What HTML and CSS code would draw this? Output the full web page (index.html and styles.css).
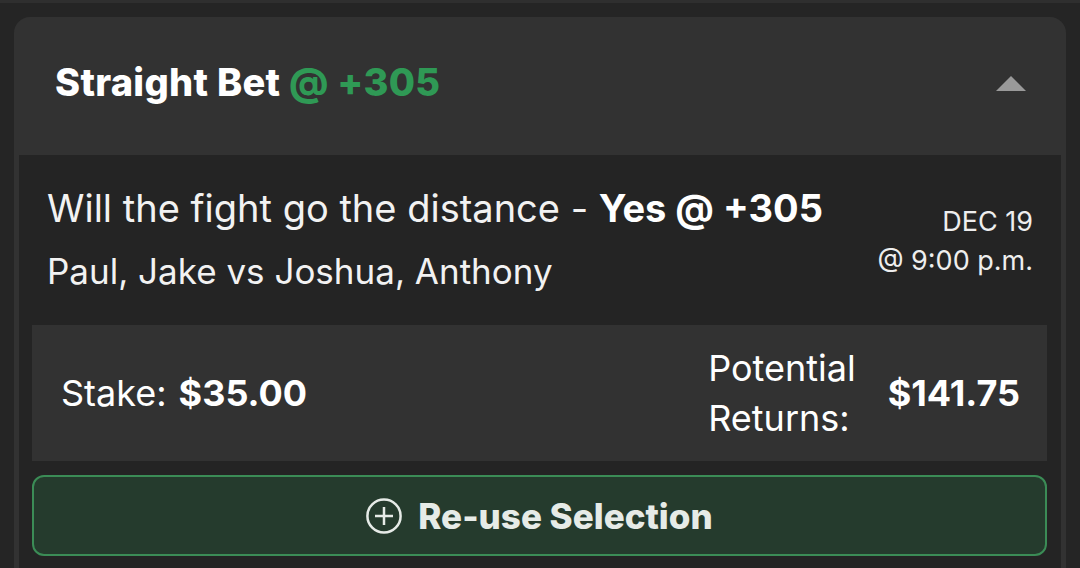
FILE: index.html
```html
<!DOCTYPE html>
<html>
<head>
<meta charset="utf-8">
<link rel="stylesheet" href="styles.css">
</head>
<body>
<div class="topstrip"></div>
<div class="page">
  <div class="card">
    <div class="card-header">
      <div class="title">Straight Bet <span class="odds">@ +305</span></div>
      <div class="chevron"></div>
    </div>
    <div class="panel">
      <div class="info">
        <div class="selection">
          <div class="market">Will the fight go the distance - <b>Yes @ +305</b></div>
          <div class="matchup">Paul, Jake vs Joshua, Anthony</div>
        </div>
        <div class="date">
          <div>DEC 19</div>
          <div>@ 9:00 p.m.</div>
        </div>
      </div>
      <div class="stake-box">
        <div class="stake"><span class="label">Stake:</span><span class="value">$35.00</span></div>
        <div class="returns"><span class="label">Potential<br>Returns:</span><span class="value">$141.75</span></div>
      </div>
      <button class="reuse">
        <svg class="plus" width="36" height="36" viewBox="0 0 36 36"><circle cx="18" cy="18" r="16.6" fill="none" stroke="#e6ebe7" stroke-width="2.5"/><path d="M18 9v18M9 18h18" stroke="#e6ebe7" stroke-width="2.5" fill="none"/></svg>
        <span>Re-use Selection</span>
      </button>
    </div>
  </div>
</div>
</body>
</html>
```
FILE: styles.css
```css
html, body {
  margin: 0;
  padding: 0;
  background: #252525;
  height: 568px;
  overflow: hidden;
  font-family: Inter, "Noto Sans", sans-serif;
  color: #ffffff;
}
.topstrip {
  height: 3px;
  background: #2f2f2f;
}
.page {
  padding: 14px 14px 0 14px;
}
.card {
  background: #323232;
  border-radius: 16px 16px 0 0;
  padding: 0 5px;
  height: 560px;
}
.card-header {
  display: flex;
  align-items: center;
  justify-content: space-between;
  padding: 45px 35px 53px 36px;
}
.title {
  font-size: 38px;
  font-weight: 800;
  line-height: 40px;
  letter-spacing: 0.3px;
}
.odds {
  color: #2f9955;
}
.chevron {
  width: 0;
  height: 0;
  border-left: 15px solid transparent;
  border-right: 15px solid transparent;
  border-bottom: 15px solid #9a9a9a;
  margin-top: 2px;
}
.panel {
  background: #242424;
  padding: 0 14px 0 13px;
  height: 420px;
}
.info {
  display: flex;
  justify-content: space-between;
  padding: 31px 14px 34px 15px;
}
.market {
  font-size: 38px;
  line-height: 44px;
  color: #f2f2f2;
  white-space: nowrap;
}
.market b {
  font-weight: 700;
  color: #ffffff;
}
.matchup {
  font-size: 35px;
  line-height: 40px;
  margin-top: 21px;
  color: #f2f2f2;
}
.date {
  margin-top: 16px;
  text-align: right;
  font-size: 27px;
  line-height: 39px;
  color: #eeeeee;
}
.stake-box {
  background: #323232;
  height: 136px;
  display: flex;
  align-items: center;
  justify-content: space-between;
  padding: 0 27px 0 29px;
}
.stake, .returns {
  display: flex;
  align-items: center;
  font-size: 36px;
}
.stake .label {
  margin-right: 12px;
}
.returns .label {
  line-height: 50px;
  margin-right: 32px;
}
.value {
  font-weight: 700;
}
.reuse {
  margin-top: 14px;
  width: 100%;
  height: 81px;
  background: #253b2d;
  border: 2px solid #3b8c56;
  border-radius: 12px;
  display: flex;
  align-items: center;
  justify-content: center;
  gap: 16px;
  font-family: Inter, "Noto Sans", sans-serif;
  font-size: 35px;
  font-weight: 800;
  color: #e6ebe7;
  padding: 0;
}
.plus {
  display: block;
}
```
